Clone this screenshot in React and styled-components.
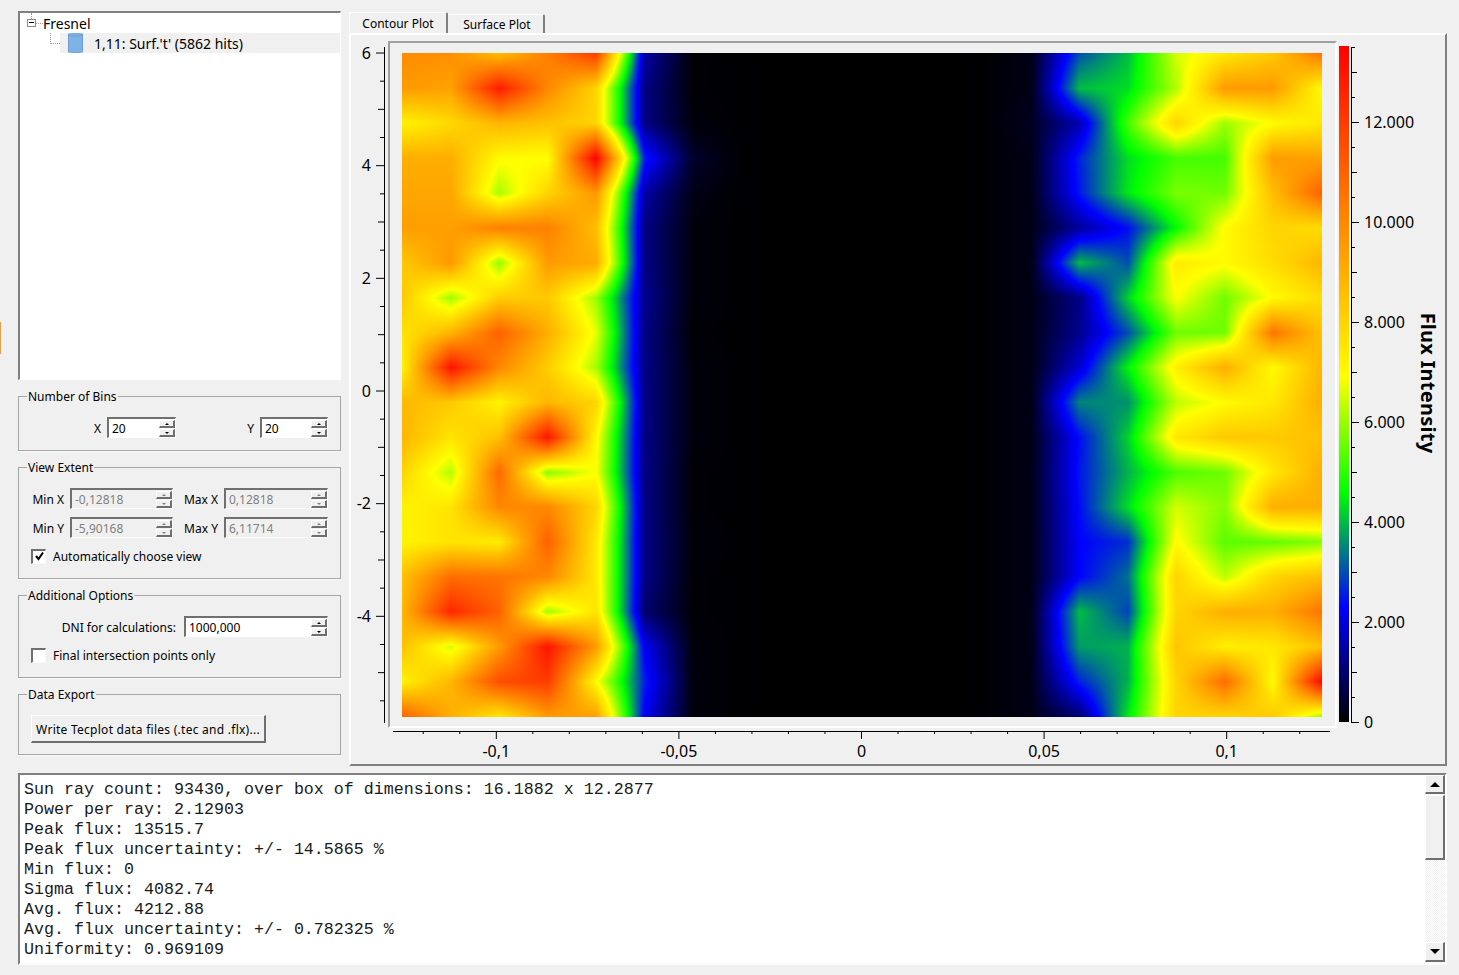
import React, { useEffect, useRef } from 'react';
import styled, { createGlobalStyle } from 'styled-components';

// value grid in thousands, columns c0..c6 + c13..c19, the middle is black
const fluxLeft = [
  [9.9, 9.8, 8.6, 10.2, 12, 1.5, 0.05],
  [9.5, 9.3, 12.8, 10, 8, 1.2, 0.05],
  [7.2, 7.9, 8.8, 8.5, 8, 1.2, 0.1],
  [9, 9, 7, 6.9, 13.5, 2.6, 0.4],
  [9.2, 9.2, 6.1, 8, 9.6, 1.5, 0.2],
  [9.4, 9.4, 10.2, 10.2, 8.6, 1.2, 0.1],
  [8.3, 9.6, 5.9, 9.5, 9.1, 1.2, 0.1],
  [8.3, 6, 8.2, 8.3, 6, 1.3, 0.1],
  [7.6, 8.8, 11, 9, 6.7, 1.2, 0.05],
  [7.2, 13, 10, 8.2, 6.1, 1.2, 0.1],
  [8.7, 8.3, 7.2, 8.8, 8, 1.2, 0.1],
  [8.8, 7.6, 8.5, 13, 7.1, 1.2, 0.1],
  [8, 6.2, 10.8, 5.8, 6.9, 1.2, 0.05],
  [7.2, 7.6, 10, 10, 8, 1.2, 0.05],
  [7.2, 7.6, 7.4, 11, 7.5, 1.2, 0.1],
  [8.5, 10.7, 10.5, 10, 7.5, 1.2, 0.05],
  [8.8, 12.5, 11, 6, 7.6, 1, 0.05],
  [8.5, 6.5, 9.5, 13, 9.5, 2.2, 0.1],
  [7.2, 8.8, 11.5, 12, 7, 2.6, 0.1],
  [11, 9, 7.5, 9.5, 9.4, 2.2, 0.1],
];

const fluxRight = [
  [0.2, 3, 4, 6.5, 7.5, 8.3, 10.5],
  [0.2, 4, 4.3, 6.2, 9.5, 9.5, 7],
  [0.3, 1.6, 5.2, 8, 6, 7, 7.5],
  [0.2, 2.6, 4.3, 5.2, 5.2, 9.5, 9.3],
  [0.2, 2.5, 4.4, 5.7, 5.6, 8.6, 11],
  [0.2, 1.4, 2.4, 4.6, 7, 8, 7.8],
  [0.2, 4, 3, 7.4, 7, 7.8, 8.8],
  [0.2, 1.2, 4.2, 6.9, 5.6, 7, 7.8],
  [0.2, 1.3, 3, 5.6, 5.6, 10.5, 8.5],
  [0.2, 1.9, 4.5, 7.3, 9, 7, 8.8],
  [0.2, 3.5, 3.6, 6.3, 7, 7.5, 9],
  [0.2, 2.4, 4.2, 7.5, 8.3, 8.3, 8.5],
  [0.2, 2.5, 3.9, 5.3, 5.6, 7.5, 9],
  [0.2, 2.4, 4.3, 6.5, 5.8, 9, 9],
  [0.2, 2.3, 2.7, 7, 5.4, 5.5, 5.8],
  [0.2, 2.3, 3.3, 8, 6.3, 8, 8.6],
  [0.2, 4, 2.9, 8, 9, 9, 10.5],
  [0.2, 3.7, 3.9, 8.4, 7.3, 7.5, 8.5],
  [0.2, 2.6, 3.9, 8, 10.7, 7, 13.3],
  [0.2, 1, 4.4, 8, 8, 8.3, 6],
];

const fluxGrid = fluxLeft.map((row, i) => [...row, 0.02, 0, 0, 0, 0, 0.02, ...fluxRight[i]]);

const colorStops = [
  [0, [0, 0, 0]],
  [2.3, [0, 0, 255]],
  [4.6, [0, 255, 0]],
  [6.9, [255, 255, 0]],
  [13.515, [255, 0, 0]],
];

const fluxColor = (value) => {
  for (let i = 1; i < colorStops.length; i++) {
    const [v1, c1] = colorStops[i];
    if (value <= v1) {
      const [v0, c0] = colorStops[i - 1];
      const t = (value - v0) / (v1 - v0);
      return c0.map((c, n) => c + (c1[n] - c) * t);
    }
  }
  return colorStops[colorStops.length - 1][1];
};

const GlobalStyle = createGlobalStyle`
  html, body {
    margin: 0;
    height: 975px;
    overflow: hidden;
    background: #f0f0f0;
    font-family: "Noto Sans", "Open Sans", sans-serif;
    font-size: 12px;
    color: #000;
  }
`;

const Page = styled.div`
  position: relative;
  width: 1459px;
  height: 975px;
  box-sizing: border-box;
  padding: 11px 12px 0 18px;
`;

const EdgeMark = styled.div`
  position: absolute;
  left: 0;
  top: 322px;
  width: 1px;
  height: 32px;
  background: #e8a050;
`;

const Main = styled.div`
  display: grid;
  grid-template-columns: 323px 1098px;
  column-gap: 8px;
`;

const LeftColumn = styled.div`
  display: flex;
  flex-direction: column;
  gap: 8px;
`;

const TreePanel = styled.div`
  height: 369px;
  box-sizing: border-box;
  background: #fff;
  border-style: solid;
  border-width: 2px 1px 1px 2px;
  border-color: #808080 #fff #fff #808080;
  font-size: 14px;
`;

const TreeRow = styled.div`
  display: flex;
  align-items: center;
  height: 20px;
  padding-left: ${(p) => p.$indent}px;
`;

const ExpandBox = styled.span`
  position: relative;
  width: 7px;
  height: 6px;
  border: 1px solid #8c8c8c;

  &::before {
    content: '';
    position: absolute;
    left: 3px;
    top: -7px;
    height: 6px;
    border-left: 1px dotted #9a9a9a;
  }

  &::after {
    content: '';
    position: absolute;
    left: 1px;
    right: 1px;
    top: 2px;
    height: 1px;
    background: #000;
  }
`;

const DotLine = styled.span`
  width: 7px;
  border-top: 1px dotted #9a9a9a;
`;

const Twig = styled.span`
  width: 9px;
  height: 10px;
  align-self: flex-start;
  border-left: 1px dotted #9a9a9a;
  border-bottom: 1px dotted #9a9a9a;
`;

const SelectedItem = styled.div`
  flex: 1;
  display: flex;
  align-items: center;
  height: 20px;
  background: #f0f0f0;
  padding-left: 8px;
`;

const CylinderIcon = styled.svg`
  width: 15px;
  height: 20px;
  margin-right: 11px;
`;

const GroupBox = styled.fieldset`
  height: ${(p) => p.$height}px;
  box-sizing: border-box;
  min-width: 0;
  margin: 0;
  padding: ${(p) => p.$top}px 0 0;
  border: 1px solid #a6a6a6;
  box-shadow: 0 1px 0 #fafafa;
  display: flex;
  flex-direction: column;
  gap: 8px;
`;

const GroupTitle = styled.legend`
  margin-left: 8px;
  padding: 0 1px;
  line-height: 18px;
  height: 16px;
`;

const FieldRow = styled.div`
  display: flex;
  align-items: center;
  gap: ${(p) => p.$gap || 6}px;
`;

const FieldLabel = styled.label`
  width: ${(p) => p.$width}px;
  padding-top: 1px;
  text-align: right;
`;

const SpinFrame = styled.div`
  display: flex;
  width: ${(p) => p.$width}px;
  height: 21px;
  box-sizing: border-box;
  border-style: solid;
  border-width: 2px 1px 1px 2px;
  border-color: #707070 #fff #fff #707070;
  background: ${(p) => (p.$disabled ? '#f0f0f0' : '#fff')};
  color: ${(p) => (p.$disabled ? '#808080' : '#000')};
`;

const SpinValue = styled.span`
  flex: 1;
  padding-left: 3px;
  line-height: 20px;
`;

const SpinButtons = styled.div`
  width: 16px;
  display: flex;
  flex-direction: column;
  gap: 1px;
  padding-top: 1px;
`;

const SpinButton = styled.span`
  flex: 1;
  display: flex;
  align-items: center;
  justify-content: center;
  box-sizing: border-box;
  background: #f0f0f0;
  border-style: solid;
  border-width: 1px 2px 2px 1px;
  border-color: #fff #6e6e6e #6e6e6e #fff;
`;

const SpinArrow = styled.span`
  width: 0;
  height: 0;
  border-left: 2px solid transparent;
  border-right: 2px solid transparent;
  border-${(p) => (p.$down ? 'top' : 'bottom')}: 2px solid ${(p) => (p.$disabled ? '#808080' : '#000')};
`;

const CheckRow = styled.div`
  display: flex;
  align-items: center;
  gap: 7px;
  height: 20px;
  padding-left: 12px;
`;

const CheckBox = styled.span`
  width: 15px;
  height: 15px;
  box-sizing: border-box;
  display: flex;
  align-items: center;
  justify-content: center;
  background: #fff;
  border-style: solid;
  border-width: 2px 1px 1px 2px;
  border-color: #707070 #fafafa #fafafa #707070;
`;

const PushButton = styled.button`
  width: 235px;
  height: 28px;
  margin-left: 12px;
  padding: 2px 0 0;
  box-sizing: border-box;
  background: #f0f0f0;
  font: inherit;
  letter-spacing: 0.26px;
  color: #000;
  border-style: solid;
  border-width: 1px 2px 2px 1px;
  border-color: #fff #6e6e6e #6e6e6e #fff;
`;

const RightColumn = styled.div`
  padding-top: 1px;
`;

const TabBar = styled.div`
  display: flex;
  height: 21px;
  align-items: flex-end;
`;

const Tab = styled.div`
  width: ${(p) => p.$width}px;
  height: ${(p) => (p.$active ? 21 : 19)}px;
  box-sizing: border-box;
  display: flex;
  align-items: center;
  justify-content: center;
  padding-left: ${(p) => (p.$active ? 0 : 3)}px;
  border-top: 1px solid #fff;
  border-left: ${(p) => (p.$active ? '1px solid #fff' : 'none')};
  border-right: 2px solid #808080;
  border-radius: 2px 2px 0 0;
`;

const TabPane = styled.div`
  height: 733px;
  box-sizing: border-box;
  border-style: solid;
  border-width: 2px;
  border-color: #fff #808080 #808080 #fff;
`;

const PlotRow = styled.div`
  display: flex;
  align-items: flex-start;
`;

const AxisSvg = styled.svg`
  display: block;
  overflow: visible;
  font-family: "Noto Sans", sans-serif;
  font-size: 16px;
  fill: #000;
`;

const PlotFrame = styled.div`
  width: 949px;
  height: 687px;
  margin-top: 6px;
  box-sizing: border-box;
  padding: 10px 13px 0 12px;
  border-style: solid;
  border-width: 2px;
  border-color: #a0a0a0 #fff #fff #a0a0a0;
`;

const HeatCanvas = styled.canvas`
  display: block;
`;

const LogPanel = styled.div`
  display: flex;
  margin-top: 7px;
  width: 1429px;
  height: 192px;
  box-sizing: border-box;
  background: #fff;
  border-style: solid;
  border-width: 2px;
  border-color: #808080 #fff #fafafa #808080;
`;

const LogText = styled.pre`
  flex: 1;
  margin: 0;
  padding: 5px 0 0 4px;
  font-family: "Liberation Mono", monospace;
  font-size: 16.67px;
  line-height: 20px;
  color: #1a1a1a;
`;

const ScrollBar = styled.div`
  width: 20px;
  display: flex;
  flex-direction: column;
  background: repeating-conic-gradient(#fff 0 25%, #f0f0f0 0 50%) 0 0 / 2px 2px;
`;

const ScrollPart = styled.div`
  height: ${(p) => p.$height}px;
  margin-top: ${(p) => p.$gapTop || 0}px;
  box-sizing: border-box;
  display: flex;
  align-items: center;
  justify-content: center;
  background: #f0f0f0;
  border-style: solid;
  border-width: 1px 2px 2px 1px;
  border-color: #fff #6e6e6e #6e6e6e #fff;
`;

const ScrollArrow = styled.span`
  width: 0;
  height: 0;
  border-left: 5px solid transparent;
  border-right: 5px solid transparent;
  border-${(p) => (p.$down ? 'top' : 'bottom')}: 5px solid #000;
`;

const HeatMap = () => {
  const canvasRef = useRef(null);

  useEffect(() => {
    const ctx = canvasRef.current.getContext('2d');
    const w = 920;
    const h = 664;
    const img = ctx.createImageData(w, h);
    for (let y = 0; y < h; y++) {
      const v = (y / (h - 1)) * 19;
      const r0 = Math.min(Math.floor(v), 18);
      const fy = v - r0;
      for (let x = 0; x < w; x++) {
        const u = (x / (w - 1)) * 19;
        const c0 = Math.min(Math.floor(u), 18);
        const fx = u - c0;
        const top = fluxGrid[r0][c0] * (1 - fx) + fluxGrid[r0][c0 + 1] * fx;
        const bottom = fluxGrid[r0 + 1][c0] * (1 - fx) + fluxGrid[r0 + 1][c0 + 1] * fx;
        const [r, g, b] = fluxColor(top * (1 - fy) + bottom * fy);
        const i = (y * w + x) * 4;
        img.data[i] = r;
        img.data[i + 1] = g;
        img.data[i + 2] = b;
        img.data[i + 3] = 255;
      }
    }
    ctx.putImageData(img, 0, 0);
  }, []);

  return <HeatCanvas ref={canvasRef} width={920} height={664} />;
};

const SpinBox = ({ width, value, disabled }) => (
  <SpinFrame $width={width} $disabled={disabled}>
    <SpinValue>{value}</SpinValue>
    <SpinButtons>
      <SpinButton><SpinArrow $disabled={disabled} /></SpinButton>
      <SpinButton><SpinArrow $down $disabled={disabled} /></SpinButton>
    </SpinButtons>
  </SpinFrame>
);

// ticks are in page coordinates, the viewBox of each axis is its place on the page
const YAxis = () => {
  const ticks = [];
  for (let i = -11; i <= 12; i++) {
    const y = 391 - 28.165 * i;
    const len = i % 4 === 0 ? 8 : i % 2 === 0 ? 6 : 4;
    ticks.push(<line key={i} x1={384 - len} x2={384} y1={y} y2={y} stroke="#000" />);
  }
  return (
    <AxisSvg width="37" height="693" viewBox="351 35 37 693">
      <line x1="384.5" x2="384.5" y1="47" y2="723" stroke="#000" />
      {ticks}
      {[6, 4, 2, 0, -2, -4].map((v) => (
        <text key={v} x="371" y={391 - 56.33 * v + 5.5} textAnchor="end">{v}</text>
      ))}
    </AxisSvg>
  );
};

const XAxis = () => {
  const ticks = [];
  for (let i = -12; i <= 12; i++) {
    const x = 861.5 + 36.52 * i;
    const len = i % 5 === 0 ? 8 : 3;
    ticks.push(<line key={i} x1={x} x2={x} y1={731} y2={731 + len} stroke="#000" />);
  }
  const labels = [[-0.1, '-0,1'], [-0.05, '-0,05'], [0, '0'], [0.05, '0,05'], [0.1, '0,1']];
  return (
    <AxisSvg width="1094" height="36" viewBox="351 728 1094 36">
      <line x1="393" x2="1330" y1="731.5" y2="731.5" stroke="#000" />
      {ticks}
      {labels.map(([v, text]) => (
        <text key={text} x={861.5 + v * 3652} y="757" textAnchor="middle">{text}</text>
      ))}
    </AxisSvg>
  );
};

const ColorBar = () => {
  const ticks = [];
  for (let i = 0; i <= 27; i++) {
    const y = 722.5 - 25 * i;
    const len = i % 4 === 0 ? 8 : i % 2 === 0 ? 6 : 4;
    ticks.push(<line key={i} x1={1351} x2={1351 + len} y1={y} y2={y} stroke="#000" />);
  }
  return (
    <AxisSvg width="108" height="693" viewBox="1337 35 108 693">
      <defs>
        <linearGradient id="fluxScale" x1="0" y1="1" x2="0" y2="0">
          {colorStops.map(([v, c]) => (
            <stop key={v} offset={v / 13.515} stopColor={`rgb(${c.join(',')})`} />
          ))}
        </linearGradient>
      </defs>
      <rect x="1339" y="46" width="10" height="676" fill="url(#fluxScale)" />
      <line x1="1351.5" x2="1351.5" y1="47" y2="723" stroke="#000" />
      {ticks}
      {[0, 2, 4, 6, 8, 10, 12].map((v) => (
        <text key={v} x="1364" y={722.5 - 50 * v + 5}>
          {v === 0 ? '0' : `${v}.000`}
        </text>
      ))}
      <text
        transform="translate(1421 383) rotate(90)"
        textAnchor="middle"
        fontWeight="700"
        fontSize="20"
        letterSpacing="0.25"
      >
        Flux Intensity
      </text>
    </AxisSvg>
  );
};

const logLines = `Sun ray count: 93430, over box of dimensions: 16.1882 x 12.2877
Power per ray: 2.12903
Peak flux: 13515.7
Peak flux uncertainty: +/- 14.5865 %
Min flux: 0
Sigma flux: 4082.74
Avg. flux: 4212.88
Avg. flux uncertainty: +/- 0.782325 %
Uniformity: 0.969109`;

const App = () => {
  return (
    <Page>
      <GlobalStyle />
      <EdgeMark />
      <Main>
        <LeftColumn>
          <TreePanel>
            <TreeRow $indent={7}>
              <ExpandBox />
              <DotLine />
              <span>Fresnel</span>
            </TreeRow>
            <TreeRow $indent={30}>
              <Twig />
              <SelectedItem>
                <CylinderIcon viewBox="0 0 15 20">
                  <path d="M0.5 1 Q7.5 0 14.5 1 V19 Q7.5 20 0.5 19 Z" fill="#7fb3e6" stroke="#6a9fd4" />
                  <path d="M0.5 2.5 Q7.5 4 14.5 2.5" fill="none" stroke="#6a9fd4" />
                </CylinderIcon>
                <span>1,11: Surf.'t' (5862 hits)</span>
              </SelectedItem>
            </TreeRow>
          </TreePanel>

          <GroupBox $height={63} $top={13}>
            <GroupTitle>Number of Bins</GroupTitle>
            <FieldRow>
              <FieldLabel $width={82}>X</FieldLabel>
              <SpinBox width={69} value="20" />
              <FieldLabel $width={72}>Y</FieldLabel>
              <SpinBox width={68} value="20" />
            </FieldRow>
          </GroupBox>

          <GroupBox $height={120} $top={13}>
            <GroupTitle>View Extent</GroupTitle>
            <FieldRow>
              <FieldLabel $width={45}>Min X</FieldLabel>
              <SpinBox width={103} value="-0,12818" disabled />
              <FieldLabel $width={39}>Max X</FieldLabel>
              <SpinBox width={104} value="0,12818" disabled />
            </FieldRow>
            <FieldRow>
              <FieldLabel $width={45}>Min Y</FieldLabel>
              <SpinBox width={103} value="-5,90168" disabled />
              <FieldLabel $width={39}>Max Y</FieldLabel>
              <SpinBox width={104} value="6,11714" disabled />
            </FieldRow>
            <CheckRow>
              <CheckBox>
                <svg width="11" height="11" viewBox="0 0 11 11">
                  <path d="M2 5 L4.5 8 L9 1.5" fill="none" stroke="#000" strokeWidth="2" />
                </svg>
              </CheckBox>
              <span>Automatically choose view</span>
            </CheckRow>
          </GroupBox>

          <GroupBox $height={91} $top={13}>
            <GroupTitle>Additional Options</GroupTitle>
            <FieldRow $gap={8}>
              <FieldLabel $width={157}>DNI for calculations:</FieldLabel>
              <SpinBox width={144} value="1000,000" />
            </FieldRow>
            <CheckRow>
              <CheckBox />
              <span>Final intersection points only</span>
            </CheckRow>
          </GroupBox>

          <GroupBox $height={69} $top={13}>
            <GroupTitle>Data Export</GroupTitle>
            <PushButton>Write Tecplot data files (.tec and .flx)...</PushButton>
          </GroupBox>
        </LeftColumn>

        <RightColumn>
          <TabBar>
            <Tab $width={99} $active>Contour Plot</Tab>
            <Tab $width={97}>Surface Plot</Tab>
          </TabBar>
          <TabPane>
            <PlotRow>
              <YAxis />
              <PlotFrame>
                <HeatMap />
              </PlotFrame>
              <ColorBar />
            </PlotRow>
            <XAxis />
          </TabPane>
        </RightColumn>
      </Main>

      <LogPanel>
        <LogText>{logLines}</LogText>
        <ScrollBar>
          <ScrollPart $height={19}><ScrollArrow /></ScrollPart>
          <ScrollPart $height={65} $gapTop={1} />
          <ScrollPart $height={20} $gapTop={82}><ScrollArrow $down /></ScrollPart>
        </ScrollBar>
      </LogPanel>
    </Page>
  );
};

export default App;
